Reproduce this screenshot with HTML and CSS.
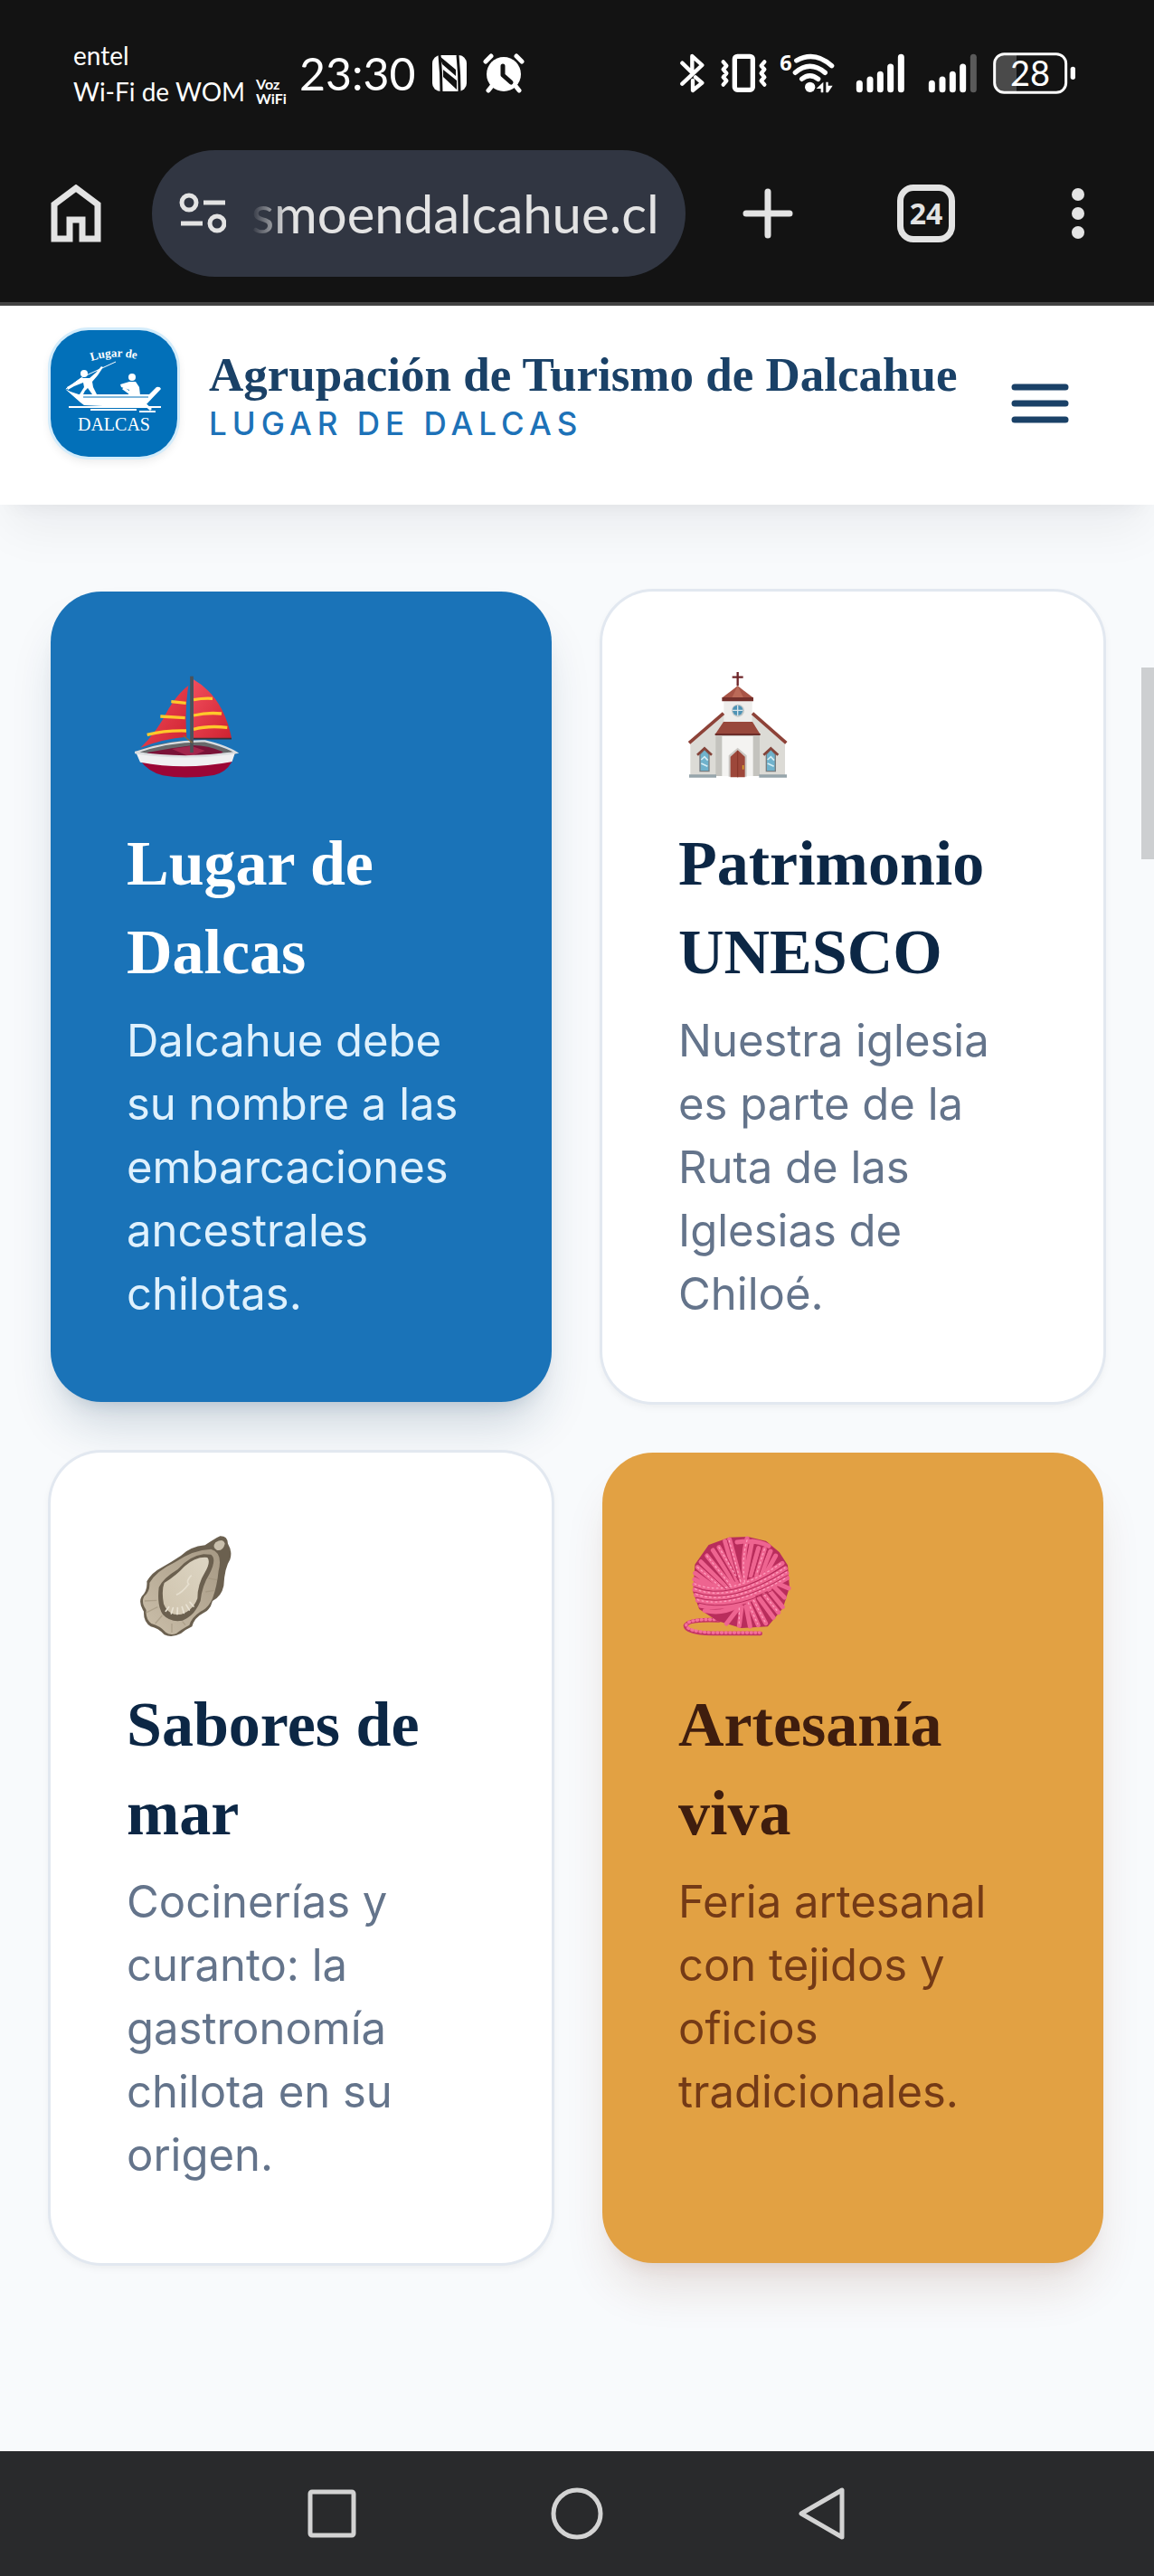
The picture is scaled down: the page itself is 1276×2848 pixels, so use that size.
FILE: index.html
```html
<!DOCTYPE html>
<html lang="es">
<head>
    <meta charset="utf-8">
    <meta name="viewport" content="width=device-width, initial-scale=1">
    <title>Agrupación de Turismo de Dalcahue</title>
    <link rel="stylesheet" href="styles.css">
</head>
<body>
    <!-- Phone status bar -->
    <div class="status-bar">
        <div class="status-left">
            <div class="carrier">
                <span>entel</span>
                <span>Wi-Fi de WOM</span>
            </div>
            <div class="voz"><span>Voz</span><span>WiFi</span></div>
            <span class="clock">23:30</span>
            <svg class="nfc" width="40" height="42" viewBox="0 0 40 42">
                <rect x="1" y="1" width="38" height="40" rx="9" fill="#fff"/>
                <path d="M9 1Q11 20 11 41M29 1Q31 20 31 41" fill="none" stroke="#131313" stroke-width="3"/>
                <path d="M9 2L27 17V24L12 11ZM13 17L28 29V39L13 25Z" fill="#131313"/>
            </svg>
            <svg width="46" height="44" viewBox="0 0 46 44">
                <circle cx="23" cy="23" r="19" fill="#fff"/>
                <path d="M3 9L9 3M43 9L37 3M10 36L6 41M36 36L40 41" stroke="#fff" stroke-width="5" stroke-linecap="round"/>
                <path d="M22 14V24L31 32" fill="none" stroke="#131313" stroke-width="5" stroke-linecap="round" stroke-linejoin="round"/>
            </svg>
        </div>
        <div class="status-right">
            <svg width="34" height="48" viewBox="60 54 102 144" fill="none" stroke="#fff" stroke-width="13" stroke-linecap="round" stroke-linejoin="round">
                <path d="M73 92L106 124V69L139 99L73 161M117 139L139 158L108 183V150"/>
            </svg>
            <svg width="54" height="48" viewBox="198 54 162 144" fill="none" stroke="#fff" stroke-linecap="round" stroke-linejoin="round">
                <rect x="247" y="70" width="60" height="111" rx="9" stroke-width="16"/>
                <path d="M209 88L220 101L209 113L220 126L209 139L220 151L209 164M346 88L335 101L346 113L335 126L346 139L335 151L346 164" stroke-width="13"/>
            </svg>
            <svg class="wifi" width="66" height="48" viewBox="396 54 198 144" fill="none" stroke="#fff" stroke-width="16" stroke-linecap="round">
                <path d="M452 84Q511 50 569 101M448 124Q496 82 547 124M470 145Q496 123 524 145"/>
                <circle cx="497" cy="172" r="17" fill="#fff" stroke="none"/>
                <path d="M518 177L541 155V190H533V177ZM550 155H557V167H572L557 190H550Z" fill="#fff" stroke="none"/>
                <text class="wifi-gen" x="397" y="116">6</text>
            </svg>
            <svg width="62" height="48" viewBox="630 54 186 144" stroke="#fff" stroke-width="21" stroke-linecap="round">
                <path d="M661 160V179M696 147V179M730 130V179M764 105V179M799 73V179"/>
            </svg>
            <svg width="71" height="48" viewBox="852 54 213 144" stroke="#fff" stroke-width="21" stroke-linecap="round">
                <path d="M901 160V179M936 147V179M970 130V179M1004 105V179"/>
                <path d="M1039 73V179" stroke="#5a5a5a"/>
            </svg>
            <svg width="93" height="48" viewBox="1101 54 279 144">
                <path d="M1182 65V188H1140Q1110 188 1110 158V95Q1110 65 1140 65Z" fill="#4a4a4a"/>
                <rect x="1109" y="62" width="237" height="128" rx="32" fill="none" stroke="#fff" stroke-width="9"/>
                <rect x="1361" y="104" width="16" height="43" rx="8" fill="#fff"/>
                <text class="battery-level" x="1227" y="169">28</text>
            </svg>
        </div>
    </div>

    <!-- Browser toolbar -->
    <div class="toolbar">
        <button class="tool-home" aria-label="Inicio">
            <svg width="56" height="64" viewBox="0 0 56 64" fill="none" stroke="#e3e3e3" stroke-width="7">
                <path d="M4 60V22L28 4L52 22V60H35V39H21V60Z"/>
            </svg>
        </button>
        <div class="address">
            <svg width="52" height="46" viewBox="0 0 52 46" fill="none" stroke="#e3e3e3" stroke-width="5">
                <circle cx="11" cy="11" r="8"/>
                <circle cx="42" cy="34" r="8"/>
                <path d="M27 11H51M2 34H26"/>
            </svg>
            <input type="text" class="url" aria-label="Dirección" value="smoendalcahue.cl">
        </div>
        <button class="tool tool-new" aria-label="Nueva pestaña">
            <svg width="56" height="56" viewBox="0 0 56 56" stroke="#e3e3e3" stroke-width="7" stroke-linecap="round">
                <path d="M28 4V52M4 28H52"/>
            </svg>
        </button>
        <button class="tool" aria-label="Pestañas"><span class="tab-count">24</span></button>
        <button class="tool" aria-label="Más opciones">
            <svg width="14" height="56" viewBox="0 0 14 56" fill="#e3e3e3">
                <circle cx="7" cy="7" r="7"/>
                <circle cx="7" cy="28" r="7"/>
                <circle cx="7" cy="49" r="7"/>
            </svg>
        </button>
    </div>

    <header class="site-header">
        <a href="#" class="brand">
            <svg class="logo" width="140" height="140" viewBox="0 0 140 140">
                <defs><path id="arc" d="M45 34Q72 25 104 34"/></defs>
                <rect width="140" height="140" fill="#0270b9"/>
                <text class="logo-top"><textPath href="#arc">Lugar de</textPath></text>
                <g fill="#fff">
                    <path d="M16 65L22 68L31 71H109L117 63Q121 62 122 65L104 84L100 86L37 83L33 80Z"/>
                    <circle cx="37" cy="48" r="4"/>
                    <path d="M33 53L43 53L50 47L56 40L58 41L52 50L46 57L47 63L51 71H46L41 64L38 67L36 71H32L37 63L36 58L26 62L19 66L18 63L25 59Z"/>
                    <circle cx="90" cy="52" r="4"/>
                    <path d="M87 57H94L98 63L99 72H86L87 66L78 63L77 60Z"/>
                    <path d="M20 84H122V86H20ZM44 87H95V89H44ZM98 89H116V91H98Z"/>
                </g>
                <path d="M17 65L35 52L72 35" fill="none" stroke="#fff" stroke-width="1"/>
                <path d="M80 64L102 80L111 88" fill="none" stroke="#fff" stroke-width="3"/>
                <path d="M36 74H108" stroke="#0270b9" stroke-width="1"/>
                <text class="logo-bottom" x="70" y="111">DALCAS</text>
            </svg>
            <span class="brand-text">
                <span class="brand-name">Agrupación de Turismo de Dalcahue</span>
                <span class="brand-tag">LUGAR DE DALCAS</span>
            </span>
        </a>
        <button class="menu" aria-label="Menú">
            <svg width="64" height="44" viewBox="0 0 64 44" stroke="#1a4167" stroke-width="7" stroke-linecap="round">
                <path d="M4 4H60M4 22H60M4 40H60"/>
            </svg>
        </button>
    </header>

    <main class="cards">
        <article class="card card-blue">
            <svg class="card-icon" viewBox="30 54 378 378">
                <defs>
                    <linearGradient id="sail" x1="0" y1="0" x2="1" y2="1">
                        <stop offset="0" stop-color="#f04d5c"/>
                        <stop offset="1" stop-color="#cf2230"/>
                    </linearGradient>
                </defs>
                <path d="M58 334Q160 290 290 297L395 336L380 352H75Z" fill="#67696b"/>
                <path d="M98 336L180 322L250 312Q300 312 350 334L330 350H110Z" fill="#7a1238"/>
                <path d="M180 324L245 314L290 330L240 350Z" fill="#a3264d"/>
                <path d="M75 362Q225 400 382 360Q365 400 320 411Q225 426 150 412Q100 398 75 362Z" fill="#9c0636"/>
                <path d="M62 338Q225 362 390 336L380 366Q225 396 75 368Z" fill="#f0f0f2"/>
                <path d="M58 336Q225 362 393 336Q360 315 290 298Q170 296 58 336Z" fill="none" stroke="#dadde0" stroke-width="7"/>
                <path d="M235 114Q222 190 229 284Q150 290 76 320Q130 270 170 190Q200 140 235 114Z" fill="url(#sail)"/>
                <path d="M252 94Q350 150 378 288L252 290Z" fill="url(#sail)"/>
                <path d="M178 167L227 172M142 216L224 221M98 277Q160 262 228 264M252 161Q285 155 315 157M252 213Q300 202 345 207M252 259Q300 246 364 253" fill="none" stroke="#ffc92b" stroke-width="10"/>
                <path d="M252 290H378" stroke="#3b3038" stroke-width="5"/>
                <path d="M246 83V336" stroke="#4d5157" stroke-width="11"/>
                <path d="M218 280L248 304" stroke="#8a6a3c" stroke-width="4"/>
            </svg>
            <h3>Lugar de Dalcas</h3>
            <p>Dalcahue debe su nombre a las embarcaciones ancestrales chilotas.</p>
        </article>

        <article class="card card-white">
            <svg class="card-icon" viewBox="30 54 378 378">
                <path d="M70 304L182 208H272L384 304V412H70Z" fill="#dcdbd6"/>
                <path d="M154 270H300V414H154Z" fill="#c4c3be"/>
                <path d="M175 282H278V414H175Z" fill="#f4f3f1"/>
                <path d="M181 164H275V234H181Z" fill="#eeedeb"/>
                <path d="M66 304L180 206M388 304L276 206" stroke="#8d4238" stroke-width="11"/>
                <path d="M180 234H276L302 276H152Z" fill="#98483c"/>
                <path d="M152 276H302" stroke="#6b2c28" stroke-width="6"/>
                <path d="M227 115L278 154H176Z" fill="#a85446"/>
                <path d="M227 115L246 154H208Z" fill="#bb6a58"/>
                <path d="M175 153H279V166H175Z" fill="#74302b"/>
                <path d="M227 69V115M209 86H245" stroke="#6e2529" stroke-width="7"/>
                <circle cx="228" cy="197" r="21" fill="#c3c8c8"/>
                <circle cx="227" cy="196" r="17" fill="#4e93b5"/>
                <path d="M227 179V214M210 196H244" stroke="#d8e5ea" stroke-width="4"/>
                <path d="M197 416V346L227 320L257 346V416Z" fill="#cbc8c4"/>
                <path d="M203 418V350L227 328L251 350V418Z" fill="#9d473a"/>
                <path d="M227 330V418" stroke="#853529" stroke-width="3"/>
                <path d="M245 378V392" stroke="#d9a12e" stroke-width="5"/>
                <path d="M102 342L117 326L132 342V398H102ZM322 342L337 326L352 342V398H322Z" fill="#6fb2cc" stroke="#777d80" stroke-width="4"/>
                <path d="M106 360L117 350L128 362M106 372L127 382M326 360L337 350L348 362M326 372L347 382" stroke="#d5edf5" stroke-width="5" fill="none"/>
                <path d="M93 344L117 322L141 344M313 344L337 322L361 344" fill="none" stroke="#834339" stroke-width="8"/>
                <path d="M66 409H156V419H66ZM298 409H390V419H298Z" fill="#96a5ab"/>
            </svg>
            <h3>Patrimonio UNESCO</h3>
            <p>Nuestra iglesia es parte de la Ruta de las Iglesias de Chiloé.</p>
        </article>

        <article class="card card-white">
            <svg class="card-icon" viewBox="30 30 378 378">
                <defs>
                    <linearGradient id="shell" x1="0" y1="1" x2="1" y2="0">
                        <stop offset="0" stop-color="#cbbfaa"/>
                        <stop offset="1" stop-color="#a69984"/>
                    </linearGradient>
                    <linearGradient id="meat" x1="0" y1="1" x2="1" y2="0">
                        <stop offset="0" stop-color="#cfc4ae"/>
                        <stop offset="1" stop-color="#ddd5c3"/>
                    </linearGradient>
                </defs>
                <path d="M340 55Q365 54 366 80Q382 105 373 133Q355 160 352 220Q345 255 315 270Q308 300 285 310Q255 325 247 355Q225 365 210 378Q180 393 155 382Q135 360 110 355Q85 340 87 305Q68 275 80 255Q100 235 97 205Q115 175 145 160Q180 140 210 120Q240 90 290 85Q320 65 340 55Z" fill="#6b604f"/>
                <path d="M310 98Q350 110 335 170Q330 220 315 262Q300 295 275 305Q245 325 238 350Q210 365 195 378Q175 385 160 374Q140 352 112 345Q92 330 95 300Q77 275 88 255Q108 238 106 210Q130 170 190 142Q250 100 310 98Z" fill="url(#shell)"/>
                <path d="M310 116Q330 130 305 180Q280 220 275 270Q255 320 215 335Q175 342 150 315Q130 285 137 225Q150 195 200 165Q240 120 285 115Z" fill="#6b604f"/>
                <path d="M298 126Q310 140 290 175Q265 215 265 262Q250 302 212 314Q170 322 153 280Q145 235 155 210Q195 185 222 155Q260 122 298 126Z" fill="url(#meat)"/>
                <path d="M170 290L160 304M184 293L178 312M199 293L198 314M214 290L220 310M228 283L238 300M240 274L252 288" stroke="#e9e2d3" stroke-width="5" stroke-linecap="round"/>
                <path d="M245 185Q225 205 236 214Q215 242 195 250" fill="none" stroke="#e6dfcf" stroke-width="5"/>
                <path d="M325 76Q350 60 356 80Q350 105 330 102Q312 92 325 76Z" fill="#c9bfac"/>
                <path d="M90 270L130 268M92 310L133 290M125 345L148 318M180 375V345M225 350L215 338M292 240L320 235M302 195L330 200" stroke="#9f927b" stroke-width="4" opacity=".6"/>
            </svg>
            <h3>Sabores de mar</h3>
            <p>Cocinerías y curanto: la gastronomía chilota en su origen.</p>
        </article>

        <article class="card card-gold">
            <svg class="card-icon" viewBox="30 30 378 378" fill="none" stroke-linecap="round">
                <path d="M165 334Q60 330 54 352Q55 376 145 378H302" stroke="#c43565" stroke-width="14"/>
                <path d="M165 332Q62 328 56 350Q60 372 145 375H300" stroke="#f5719b" stroke-width="10" stroke-dasharray="3 11"/>
                <path d="M200 62L260 60L320 74L363 110L390 152L396 225L374 293L325 352L240 357L160 333L102 295L82 240L88 150L132 87Z" fill="#b92d5c" stroke="#b92d5c" stroke-width="6" stroke-linejoin="round"/>
                <g stroke="#ee6490" stroke-width="15">
                    <path d="M200 66L240 215M185 72L225 205M258 63Q240 130 252 210M275 72L252 190M296 95L270 185M316 98L290 185M336 105L305 180M353 120L325 170M225 75Q290 65 330 88"/>
                    <path d="M165 92L222 190M145 102L215 210M125 120L210 225M105 140L195 230M94 158L180 232M86 178L165 236M84 198L160 240"/>
                    <path d="M84 215Q200 265 375 145M84 232Q200 280 385 162M88 250Q210 290 390 178M94 268Q210 300 392 194M104 286Q190 300 280 260M118 302Q180 316 232 282"/>
                    <path d="M232 290L190 345M240 290L232 352M255 288L268 354M262 276L295 350M280 268L320 344M298 260L345 325M316 250L362 308M334 238L376 290M350 226L382 258M366 215L396 228"/>
                </g>
                <g stroke="#b92d5c" stroke-width="3">
                    <path d="M84 224Q200 273 380 154M86 241Q205 285 388 170M91 259Q210 295 391 186M99 277Q200 304 340 236M175 90L228 200M155 98L218 205M116 130L202 228M100 149L188 231M193 70L232 208M286 84L262 188M306 96L280 185M326 102L298 182"/>
                </g>
                <g stroke="#ff9dbd" stroke-width="4" stroke-dasharray="5 10">
                    <path d="M199 70L238 210M258 68Q240 130 250 205M165 92L220 185M125 120L205 220M94 158L175 228M84 213Q200 263 374 143M86 230Q200 278 384 160M90 248Q210 288 388 176M94 266Q210 298 390 192M280 268L318 340M316 250L360 305M316 98L290 180M262 276L293 346M232 294L232 350"/>
                </g>
            </svg>
            <h3>Artesanía viva</h3>
            <p>Feria artesanal con tejidos y oficios tradicionales.</p>
        </article>
    </main>

    <div class="scroll-thumb"></div>

    <!-- Phone navigation -->
    <nav class="phone-nav">
        <button aria-label="Recientes">
            <svg width="60" height="60" viewBox="0 0 60 60"><rect x="6" y="6" width="48" height="48" rx="2"/></svg>
        </button>
        <button aria-label="Inicio">
            <svg width="60" height="60" viewBox="0 0 60 60"><circle cx="30" cy="30" r="26"/></svg>
        </button>
        <button aria-label="Atrás">
            <svg width="60" height="60" viewBox="0 0 60 60"><path d="M52 4V56L7 30Z"/></svg>
        </button>
    </nav>
</body>
</html>
```
FILE: styles.css
```css
* {
    box-sizing: border-box;
}
body {
    margin: 0;
    min-height: 100vh;
    display: flex;
    flex-direction: column;
    position: relative;
    background-color: #f8fafc;
    font-family: Inter, sans-serif;
}
button {
    border: none;
    background: none;
    padding: 0;
    display: flex;
    align-items: center;
    justify-content: center;
    cursor: pointer;
}
svg {
    display: block;
    flex-shrink: 0;
}

/* Status bar */
.status-bar {
    height: 138px;
    padding: 24px 86px 0 81px;
    display: flex;
    justify-content: space-between;
    align-items: center;
    background-color: #131313;
    color: white;
    font-family: Lato, sans-serif;
}
.status-left {
    display: flex;
    align-items: center;
}
.carrier {
    display: flex;
    flex-direction: column;
    font-size: 28px;
    line-height: 40px;
    white-space: nowrap;
}
.voz {
    display: flex;
    flex-direction: column;
    align-self: flex-end;
    margin: 0 14px 4px 12px;
    font-size: 16px;
    font-weight: bold;
    line-height: 16px;
}
.clock {
    font-size: 50px;
    line-height: 56px;
}
.nfc {
    margin: 0 17px 0 18px;
}
.status-right {
    display: flex;
    gap: 12px;
}
.wifi {
    overflow: visible;
}
.wifi-gen {
    font: bold 70px "Open Sans", sans-serif;
    fill: white;
    stroke: none;
}
.battery-level {
    font: 114px Lato, sans-serif;
    fill: white;
    text-anchor: middle;
}

/* Browser toolbar */
.toolbar {
    height: 200px;
    padding: 28px 0 28px 56px;
    display: flex;
    align-items: center;
    background-color: #131313;
    border-bottom: 4px solid #434343;
}
.tool-home {
    margin-right: 56px;
}
.address {
    flex: 1;
    min-width: 0;
    height: 140px;
    padding: 0 24px 0 30px;
    display: flex;
    align-items: center;
    gap: 28px;
    background-color: #313642;
    border-radius: 70px;
}
.url {
    flex: 1;
    min-width: 0;
    padding: 0;
    border: none;
    outline: none;
    background: none;
    color: #e3e3e3;
    font-family: Lato, sans-serif;
    font-size: 58px;
    line-height: 70px;
    -webkit-mask-image: linear-gradient(to right, transparent, #000 40px);
    mask-image: linear-gradient(to right, transparent, #000 40px);
}
.tool {
    width: 168px;
    height: 140px;
}
.tool-new {
    width: 182px;
}
.tab-count {
    width: 64px;
    height: 64px;
    border: 7px solid #e3e3e3;
    border-radius: 18px;
    color: #e3e3e3;
    font: bold 32px/50px "Open Sans", sans-serif;
}

/* Site header */
.site-header {
    padding: 27px 56px 53px;
    display: flex;
    justify-content: space-between;
    background-color: white;
    box-shadow: 0 35px 52px -10px rgba(15, 23, 42, 0.06), 0 14px 21px -14px rgba(15, 23, 42, 0.06);
}
.brand {
    display: flex;
    align-items: center;
    gap: 35px;
    text-decoration: none;
}
.logo {
    border-radius: 42px;
    box-shadow: 0 0 0 3px #d3ecfb, 0 4px 10px 2px rgba(0, 0, 0, 0.08);
}
.logo-top {
    font: bold 13px "Liberation Serif", serif;
    fill: white;
}
.logo-bottom {
    font: 20px "Liberation Serif", serif;
    fill: white;
    text-anchor: middle;
}
.brand-text {
    padding-top: 6px;
    display: flex;
    flex-direction: column;
}
.brand-name {
    color: #1a4167;
    font: bold 53px/60px "Liberation Serif", serif;
    white-space: nowrap;
}
.brand-tag {
    color: #1d72b8;
    font-size: 35px;
    font-weight: 500;
    line-height: 49px;
    letter-spacing: 6px;
}
.menu {
    width: 140px;
    height: 140px;
    margin: 11px 0 -11px;
}

/* Cards */
.cards {
    flex: 1;
    padding: 96px 56px 208px;
    display: grid;
    grid-template-columns: 1fr 1fr;
    align-content: start;
    gap: 56px;
}
.card {
    padding: 84px;
    border-radius: 56px;
}
.card-icon {
    width: 126px;
    height: 126px;
    margin-bottom: 42px;
}
.card h3 {
    margin: 0 0 14px;
    font: bold 70px/98px "Liberation Serif", serif;
}
.card p {
    margin: 0;
    font-size: 49px;
    line-height: 70px;
}
.card-blue {
    background-color: #1a73b8;
    color: white;
    box-shadow: 0 35px 52px -10px rgba(20, 60, 95, 0.18), 0 14px 21px -14px rgba(20, 60, 95, 0.2);
}
.card-blue p {
    color: #dff1fd;
}
.card-white {
    background-color: white;
    color: #0c2745;
    box-shadow: 0 0 0 3px #e2e8f0, 0 4px 8px 2px rgba(0, 0, 0, 0.05);
}
.card-white p {
    color: #64748b;
}
.card-gold {
    background-color: #e2a143;
    color: #3f1d0e;
    box-shadow: 0 35px 52px -10px rgba(110, 50, 20, 0.14), 0 14px 21px -14px rgba(110, 50, 20, 0.14);
}
.card-gold p {
    color: #743a16;
}

/* Scroll position indicator over the page */
.scroll-thumb {
    position: absolute;
    top: 738px;
    right: 0;
    width: 14px;
    height: 212px;
    background-color: #cdcfd1;
}

/* Phone navigation */
.phone-nav {
    height: 138px;
    display: flex;
    justify-content: center;
    background-color: #292a2c;
}
.phone-nav button {
    width: 271px;
}
.phone-nav svg {
    fill: none;
    stroke: #d3d3d3;
    stroke-width: 5;
    stroke-linejoin: round;
}
```
